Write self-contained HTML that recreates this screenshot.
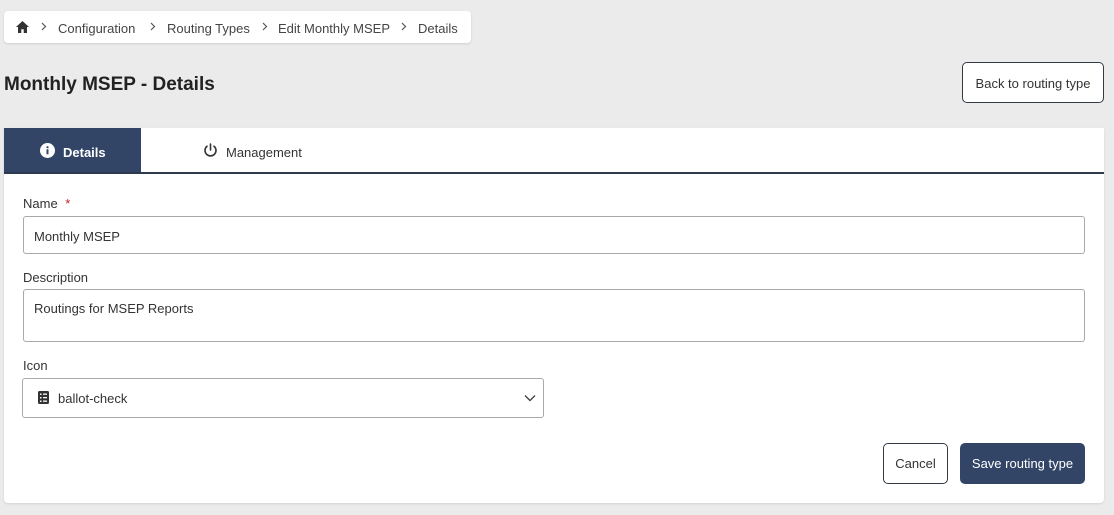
<!DOCTYPE html>
<html><head><meta charset="utf-8"><style>
*{box-sizing:border-box;margin:0;padding:0}
body{width:1114px;height:515px;background:#ebebeb;font-family:"Liberation Sans",sans-serif;color:#333;position:relative;overflow:hidden;font-size:13px}
.abs{position:absolute}
.bc{left:4px;top:11px;width:467px;height:32px;background:#fff;border-radius:4px;box-shadow:0 1px 2px rgba(0,0,0,.12)}
.bc span{position:absolute;top:10px;font-size:13px;color:#444}
.bc svg.c{position:absolute;top:11px}
h1{position:absolute;left:4px;top:74px;font-size:19px;font-weight:bold;color:#222}
.back{left:962px;top:62px;width:142px;height:41px;border:1px solid #333a44;border-radius:5px;background:#fff;font-size:13px;text-align:center;line-height:41px;color:#333}
.card{left:4px;top:128px;width:1100px;height:375px;background:#fff;border-radius:0 0 4px 4px;box-shadow:0 1px 2px rgba(0,0,0,.1)}
.tabline{left:4px;top:172px;width:1100px;height:2px;background:#2e3a4d}
.tab1{left:4px;top:128px;width:137px;height:45px;background:#324567;color:#fff;font-weight:bold;font-size:13px}
.lbl{font-size:13px;color:#333}
.inp{border:1px solid #aaa;border-radius:3px;background:#fff;font-size:13px;color:#333}
.btn{border-radius:5px;font-size:13px;text-align:center;line-height:41px}
</style></head><body>
<div class="abs bc">
<svg class="abs" style="left:12px;top:10px" width="13" height="12" viewBox="0 0 13 12"><path d="M6.5 0L0 6h2v6h3.3V8.2h2.4V12H11V6h2z" fill="#333"/></svg>
<svg class="c" style="left:37px" width="6" height="9" viewBox="0 0 6 9" fill="none" stroke="#555" stroke-width="1.2"><path d="M1 1l3.5 3.5L1 8"/></svg>
<span style="left:54px">Configuration</span>
<svg class="c" style="left:146px" width="6" height="9" viewBox="0 0 6 9" fill="none" stroke="#555" stroke-width="1.2"><path d="M1 1l3.5 3.5L1 8"/></svg>
<span style="left:163px">Routing Types</span>
<svg class="c" style="left:258px" width="6" height="9" viewBox="0 0 6 9" fill="none" stroke="#555" stroke-width="1.2"><path d="M1 1l3.5 3.5L1 8"/></svg>
<span style="left:274px">Edit Monthly MSEP</span>
<svg class="c" style="left:397px" width="6" height="9" viewBox="0 0 6 9" fill="none" stroke="#555" stroke-width="1.2"><path d="M1 1l3.5 3.5L1 8"/></svg>
<span style="left:414px">Details</span>
</div>
<h1>Monthly MSEP - Details</h1>
<div class="abs back">Back to routing type</div>
<div class="abs card"></div>
<div class="abs tab1">
<svg class="abs" style="left:36px;top:15px" width="15" height="15" viewBox="0 0 15 15"><circle cx="7.5" cy="7.5" r="7.5" fill="#fff"/><rect x="6.5" y="6.3" width="2" height="5" fill="#324567"/><circle cx="7.5" cy="4.2" r="1.1" fill="#324567"/></svg>
<span class="abs" style="left:59px;top:17px">Details</span>
</div>
<svg class="abs" style="left:203px;top:143px" width="15" height="15" viewBox="0 0 15 15" fill="none" stroke="#333" stroke-width="1.6" stroke-linecap="round"><path d="M7.5 1v6"/><path d="M4 3.2A5.5 5.5 0 1 0 11 3.2"/></svg>
<span class="abs" style="left:226px;top:145px;font-size:13px;color:#333">Management</span>
<div class="abs tabline"></div>
<span class="abs lbl" style="left:23px;top:196px">Name <span style="color:#b22;margin-left:4px">*</span></span>
<div class="abs inp" style="left:23px;top:216px;width:1062px;height:38px;padding:12px 10px">Monthly MSEP</div>
<span class="abs lbl" style="left:23px;top:270px">Description</span>
<div class="abs inp" style="left:23px;top:289px;width:1062px;height:53px;padding:11px 10px">Routings for MSEP Reports</div>
<span class="abs lbl" style="left:23px;top:358px">Icon</span>
<div class="abs inp" style="left:22px;top:378px;width:522px;height:40px;padding:12px 0 0 35px">ballot-check</div>
<svg class="abs" style="left:38px;top:391px" width="11" height="13" viewBox="0 0 11 13"><rect width="11" height="13" rx="1.5" fill="#333"/><g fill="#fff"><rect x="2" y="2.5" width="1.5" height="1.5"/><rect x="5" y="2.5" width="4" height="1.3"/><rect x="2" y="6" width="1.5" height="1.5"/><rect x="5" y="6" width="4" height="1.3"/><rect x="2" y="9.5" width="1.5" height="1.5"/><rect x="5" y="9.5" width="4" height="1.3"/></g></svg>
<svg class="abs" style="left:524px;top:394px" width="12" height="8" viewBox="0 0 12 8" fill="none" stroke="#444" stroke-width="1.4"><path d="M1 1.5l5 5 5-5"/></svg>
<div class="abs btn" style="left:883px;top:443px;width:65px;height:41px;border:1px solid #333a44;background:#fff;color:#333;line-height:39px">Cancel</div>
<div class="abs btn" style="left:960px;top:443px;width:125px;height:41px;background:#324567;color:#fff">Save routing type</div>
</body></html>
